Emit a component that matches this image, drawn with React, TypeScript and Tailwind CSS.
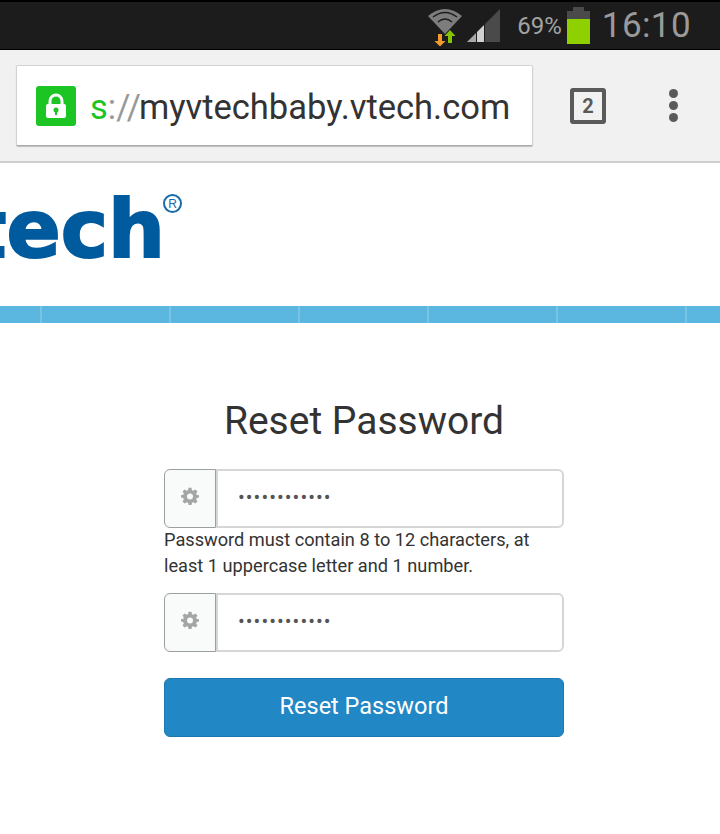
const font = { fontFamily: "Roboto, 'Liberation Sans', sans-serif" };

function Gear() {
  return (
    <svg width="18" height="18" viewBox="0 0 24 24" fill="#a3a6a6">
      <path fillRule="evenodd" d="M10 1h4l.6 3.2 1.900.8L19.200 3.200l2.800 2.800-1.800 2.700.8 1.900L24 11v3l-3 .6-.8 1.900 1.800 2.700-2.800 2.800-2.700-1.800-1.900.8L14 24h-4l-.6-3-1.900-.8-2.700 1.800L2 19.200l1.800-2.700-.8-1.900L0 14v-3l3-.6.8-1.900L2 6l2.800-2.800L7.500 5l1.900-.8L10 1zm2 7.500a4 4 0 1 0 0 8 4 4 0 0 0 0-8z" />
    </svg>
  );
}

function PasswordRow() {
  return (
    <div className="flex h-[59px] w-[400px]">
      <div className="flex w-[52px] items-center justify-center rounded-l-[6px] border border-[#9a9f9f] bg-[#f9fbfb] pr-[1px] pb-[5px]">
        <Gear />
      </div>
      <div className="flex flex-1 items-center rounded-r-[6px] border-2 border-l-2 border-[#d6d6d6] bg-white pb-[4px] pl-[20px] text-[20px] tracking-[1.05px] text-[#555555]">
        ••••••••••••
      </div>
    </div>
  );
}

export default function App() {
  return (
    <div className="flex h-[834px] w-[720px] flex-col overflow-hidden bg-white" style={font}>
      <div className="flex h-[50px] items-center justify-end border-t-2 border-b border-black bg-[#1c1c1c]">
        <svg width="36" height="40" viewBox="0 0 36 40" className="mr-[4px]">
          <path d="M1 10 Q18 -4 35 10 L18 28 Z" fill="#7d7d7d" />
          <path d="M6 11 Q18 2 30 11" stroke="#1c1c1c" strokeWidth="1.500" fill="none" />
          <path d="M11 16 Q18 10 25 16" stroke="#1c1c1c" strokeWidth="1.500" fill="none" />
          <path d="M11 28h4v7h3.500l-5.500 5.500-5.500-5.500H11z" fill="#f39a2e" />
          <path d="M21 37v-7h-3.500l5.500-6 5.500 6H25v7z" fill="#84c400" />
        </svg>
        <svg width="34" height="34" viewBox="0 0 34 34" className="mt-[1px] mr-[16px]">
          <path d="M0 33 L9 24 V33 Z" fill="#a8a8a8" />
          <path d="M10 23 L17 16 V33 H10 Z" fill="#f0f0f0" opacity="0.850" />
          <path d="M18 15 L33 0 V33 H18 Z" fill="#4a4a4a" />
        </svg>
        <span className="mr-[5px] text-[24px] text-[#a3a3a3]">69%</span>
        <div className="mr-[12px] flex h-[37px] w-[23px] flex-col items-center">
          <div className="h-[4px] w-[11px] bg-[#4a4a4a]" />
          <div className="h-[8px] w-full bg-[#4a4a4a]" />
          <div className="w-full flex-1 bg-[#8fd100]" />
        </div>
        <span className="mr-[29px] text-[35px] leading-none tracking-[0.4px] text-[#9a9a9a]">16:10</span>
      </div>

      <div className="flex h-[113px] items-center border-b-2 border-[#cfcfcf] bg-[#f1f1f1] pl-[16px]">
        <div className="flex h-[81px] w-[517px] items-center overflow-hidden rounded-[2px] border border-[#d2d2d2] border-b-[#a9a9a9] bg-white pl-[19px] shadow-[0_1px_1px_rgba(0,0,0,0.2)]">
          <div className="flex h-[40px] w-[40px] shrink-0 items-center justify-center rounded-[3px] bg-[#1cc524]">
            <svg width="22" height="26" viewBox="0 0 22 26">
              <path d="M5 12V8a6 6 0 0 1 12 0v4" stroke="#fff" strokeWidth="3" fill="none" />
              <rect x="1" y="11" width="20" height="14" rx="2" fill="#fff" />
              <circle cx="11" cy="17" r="2.500" fill="#1cc524" />
              <rect x="10" y="17" width="2" height="5" fill="#1cc524" />
            </svg>
          </div>
          <div className="mt-[4px] ml-[14px] whitespace-nowrap text-[34.500px] leading-none text-[#333333]">
            <span className="text-[#1cc524]">s</span>
            <span className="text-[#999999]">://</span>
            <span className="ml-[-2px]">myvtechbaby.vtech.com</span>
          </div>
        </div>
        <div className="ml-[37px] flex h-[36px] w-[36px] items-center justify-center rounded-[3px] border-[4px] border-[#5a5a5a] text-[20px] font-bold text-[#5a5a5a]">
          2
        </div>
        <div className="ml-[63px] flex flex-col gap-[3px]">
          <div className="h-[9px] w-[9px] rounded-full bg-[#5a5a5a]" />
          <div className="h-[9px] w-[9px] rounded-full bg-[#5a5a5a]" />
          <div className="h-[9px] w-[9px] rounded-full bg-[#5a5a5a]" />
        </div>
      </div>

      <div className="flex h-[143px] items-start overflow-hidden bg-white">
        <div
          className="mt-[12px] ml-[-84px] text-[80px] leading-[110px] font-bold tracking-[0px] text-[#005a9e] [-webkit-text-stroke:2px_#005a9e]"
          style={{ fontFamily: "'DejaVu Sans', sans-serif" }}
        >
          vtech
        </div>
        <div
          className="mt-[31px] ml-[-2px] flex h-[19px] w-[19px] items-center justify-center rounded-full border-2 border-[#1a6ba8] text-[12px] leading-none text-[#1a6ba8]"
          style={{ fontFamily: "'Liberation Sans', Arial, sans-serif" }}
        >
          R
        </div>
      </div>

      <div className="grid h-[17px] grid-cols-[42px_129px_129px_129px_129px_129px_1fr] gap-0 bg-[#5bb7e0]">
        {[0, 1, 2, 3, 4, 5].map((i) => (
          <div key={i} className="border-r-2 border-[#78c4e6]" />
        ))}
      </div>

      <div className="flex flex-col pt-[75px] pl-[164px] text-[#333333]">
        <h1 className="w-[400px] text-center text-[39px] leading-[46px] font-normal">Reset Password</h1>
        <div className="mt-[25px] flex w-[400px] flex-col">
          <PasswordRow />
          <p className="mt-[-1px] whitespace-nowrap text-[18.200px] leading-[26px] text-[#333333]">
            Password must contain 8 to 12 characters, at
            <br />
            least 1 uppercase letter and 1 number.
          </p>
          <div className="mt-[14px]">
            <PasswordRow />
          </div>
          <button className="mt-[26px] h-[59px] w-[400px] rounded-[6px] border border-[#1d78b1] bg-[#2287c5] pb-[1px] text-[23.500px] text-white">
            Reset Password
          </button>
        </div>
      </div>
    </div>
  );
}
